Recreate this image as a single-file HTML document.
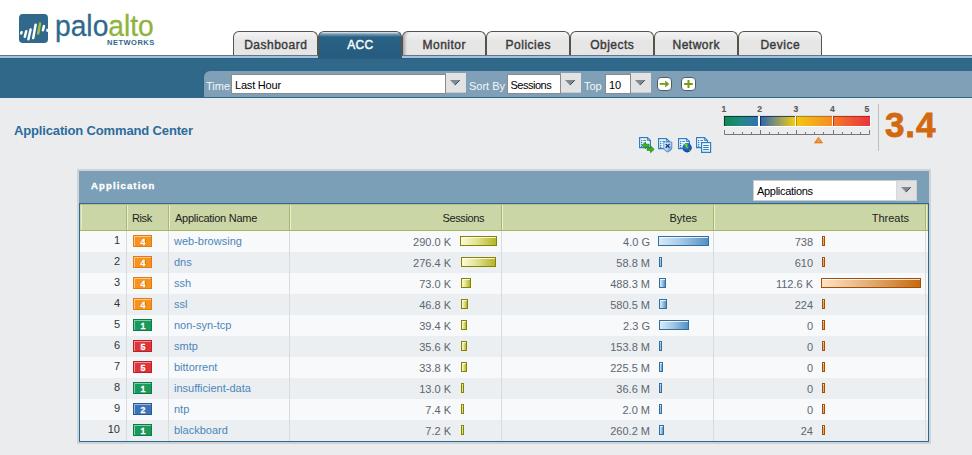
<!DOCTYPE html>
<html><head><meta charset="utf-8">
<style>
*{box-sizing:border-box;margin:0;padding:0}
html,body{width:972px;height:455px;overflow:hidden}
body{position:relative;background:#ebecee;font-family:"Liberation Sans",sans-serif;font-size:11px;color:#333}
.abs{position:absolute}
#hdr{position:absolute;left:0;top:0;width:972px;height:55px;background:#fff}
#l1{position:absolute;left:0;top:55px;width:972px;height:1px;background:#727272}
#l2{position:absolute;left:0;top:56px;width:972px;height:2px;background:#9fc3e5}
#band{position:absolute;left:0;top:58px;width:972px;height:40px;background:#30688a;border-top:1px solid #2a5f81}
#tbar{position:absolute;left:204px;top:71px;width:768px;height:26px;background:#7fa0b7;border-top-left-radius:6px;box-shadow:-1px 0 0 #2c6284}
#tbar2{position:absolute;left:0;top:97px;width:972px;height:1px;background:#2f6689}
.tab{position:absolute;top:31px;height:24px;width:84px;border:1px solid #57534b;border-bottom:none;border-radius:6px 6px 0 0;background:linear-gradient(#f4f4f4,#e6e6e6 40%,#e6e6e6);font-weight:normal;font-size:12px;color:#3a3a3a;text-align:center;line-height:26px;letter-spacing:0.5px;text-indent:0.5px;-webkit-text-stroke:0.4px #3a3a3a}
.tab.act{background:linear-gradient(#e6eef3 0,#7c9fb6 2px,#2a6286 5px,#245b7e 100%);color:#fff;height:27px;line-height:26px;letter-spacing:0.3px;-webkit-text-stroke:0.4px #fff}
.lbl{position:absolute;color:#f4f7fa;font-size:11px;top:80px}
.sel{position:absolute;top:74px;height:20px;background:#fff;border:1px solid #8c8c8c;font-size:11px;color:#000;padding-left:3px;line-height:20px;white-space:nowrap}
.btn{position:absolute;top:73px;height:20px;width:20px;background:#e2e2e2;border-bottom:1px solid #c9c9c9}
.tri{position:absolute;left:4px;top:7px;width:11px;height:6px}
.ibtn{position:absolute;top:77px;width:15px;height:14px;border:1px solid #4f5d66;border-radius:4px;background:#fff}
#title{position:absolute;left:14px;top:123px;letter-spacing:-0.15px;font-weight:bold;font-size:13px;color:#2c6b9a;white-space:nowrap}
#panel{position:absolute;left:77px;top:169px;width:854px;height:275px;background:#cfd3d7}
#phead{position:absolute;left:79px;top:171px;width:850px;height:32px;background:#7b9fb6}
#ptitle{position:absolute;left:91px;top:180px;font-weight:bold;font-size:9.5px;letter-spacing:1.15px;-webkit-text-stroke:0.35px #fff;color:#fff}
#grid{position:absolute;left:79px;top:203px;width:850px;height:239px;border:1px solid #2d6a8f;background:#f8f9fb}
#ghead{position:absolute;left:80px;top:204px;width:848px;height:27px;background:#cad6a6;border-top:1px solid #b6c08e;border-bottom:1px solid #a7b55c}
.hsep{position:absolute;top:205px;height:25px;width:2px;border-left:1px solid #a9b766;border-right:1px solid #e8eedb}
.htxt{position:absolute;top:212px;font-size:11px;color:#222;white-space:nowrap}
.row{position:absolute;left:80px;width:848px;height:21px}
.odd{background:#f8f9fb}
.even{background:#eceff1}
.bsep{position:absolute;top:231px;height:210px;width:1px;background:#d9dcdf}
.num{position:absolute;right:808px;top:3px;color:#333;font-size:11px}
.badge{position:absolute;left:53px;top:4px;width:19px;height:12px;font-size:9px;font-weight:bold;color:#fff;text-align:center;line-height:12px;padding-left:1px;-webkit-text-stroke:0.3px #fff;text-shadow:1px 0 0 rgba(70,20,0,.45)}
.r4{background:#f7931d;border:1px solid #e07c12;box-shadow:inset 1px 1px 0 #fbc78a}
.r1{background:#169b5c;border:1px solid #0f7a46;box-shadow:inset 1px 1px 0 #7fcca6}
.r5{background:#e0343a;border:1px solid #b92228;box-shadow:inset 1px 1px 0 #f08f92}
.r2{background:#3a73b8;border:1px solid #2a5a96;box-shadow:inset 1px 1px 0 #95b7e0}
.app{position:absolute;left:94px;top:4px;color:#4a86bb;white-space:nowrap}
.val{position:absolute;top:5px;color:#5d6670;white-space:nowrap}
.v1{right:477px}
.v2{right:278px}
.v3{right:115px}
.bar{position:absolute;top:5px;height:10px}
.b1{background:linear-gradient(90deg,#fbfbd6,#e2e292 45%,#b5b428);border:1px solid #858400;box-shadow:inset 0 1px 0 rgba(255,255,255,.8)}
.b2{background:linear-gradient(90deg,#d6eafa,#a6c8e6 45%,#5590c2);border:1px solid #306fa0;box-shadow:inset 0 1px 0 rgba(255,255,255,.8)}
.b3{background:linear-gradient(90deg,#fde3c4,#e6b07c 45%,#c66a12);border:1px solid #a45000;box-shadow:inset 0 1px 0 rgba(255,255,255,.8)}
</style></head><body>
<div id="hdr"></div>
<div id="l1"></div><div id="l2"></div>
<div id="band"></div>
<div id="tbar"></div>
<div id="tbar2"></div>

<!-- logo -->
<svg class="abs" style="left:19px;top:14px" width="30" height="30" viewBox="0 0 30 30">
<rect x="0" y="0" width="29" height="29" rx="3.8" fill="#31698d"/>
<g stroke="#fff" stroke-linecap="round" stroke-width="2.5" fill="none">
<line x1="2.6" y1="18.2" x2="2.2" y2="19.4"/>
<line x1="7.2" y1="17.2" x2="5.8" y2="22.7"/>
<line x1="11.6" y1="15.4" x2="9.4" y2="25.2"/>
<line x1="16.6" y1="10.7" x2="14.2" y2="24.1"/>
<line x1="25" y1="12.1" x2="23.9" y2="16.2"/>
</g>
<line x1="21" y1="9.6" x2="19.2" y2="19.5" stroke="#9ac23a" stroke-width="2.5" stroke-linecap="round"/>
<rect x="27.3" y="14.8" width="2" height="3" fill="#fff"/>
</svg>
<div class="abs" style="left:55px;top:9px;font-size:30px;line-height:34px;color:#2f6a8e;white-space:nowrap;transform:scaleX(0.94);transform-origin:0 0;-webkit-text-stroke:0.3px #2f6a8e">palo<span style="color:#8fb43b;-webkit-text-stroke:0.3px #8fb43b">alto</span></div>
<div class="abs" style="left:107px;top:39px;font-size:7.5px;font-weight:bold;line-height:8px;color:#2f6a8e;letter-spacing:0.5px">NETWORKS</div>

<!-- tabs -->
<div class="tab" style="left:233px;width:85px">Dashboard</div>
<div class="tab act" style="left:318px">ACC</div>
<div class="tab" style="left:402px;box-shadow:inset 4px 0 3px -2px rgba(0,0,0,.28)">Monitor</div>
<div class="tab" style="left:486px">Policies</div>
<div class="tab" style="left:570px">Objects</div>
<div class="tab" style="left:654px">Network</div>
<div class="tab" style="left:738px">Device</div>

<!-- toolbar -->
<div class="lbl" style="left:206px">Time</div>
<div class="sel" style="left:231px;width:215px;letter-spacing:-0.2px">Last Hour</div>
<div class="btn" style="left:446px"><svg class="tri" width="11" height="6" viewBox="0 0 11 6"><path d="M0 0H10L5 5.2Z" fill="#7b8a94"/><path d="M9.8 0.2L5 5.1" stroke="#3a4850" stroke-width="1"/></svg></div>
<div class="lbl" style="left:469px">Sort By</div>
<div class="sel" style="left:507px;width:54px;letter-spacing:-0.5px;padding-left:2.5px">Sessions</div>
<div class="btn" style="left:561px"><svg class="tri" width="11" height="6" viewBox="0 0 11 6"><path d="M0 0H10L5 5.2Z" fill="#7b8a94"/><path d="M9.8 0.2L5 5.1" stroke="#3a4850" stroke-width="1"/></svg></div>
<div class="lbl" style="left:584px">Top</div>
<div class="sel" style="left:605px;width:26px">10</div>
<div class="btn" style="left:631px"><svg class="tri" width="11" height="6" viewBox="0 0 11 6"><path d="M0 0H10L5 5.2Z" fill="#7b8a94"/><path d="M9.8 0.2L5 5.1" stroke="#3a4850" stroke-width="1"/></svg></div>
<div class="ibtn" style="left:657px"><svg width="13" height="12" viewBox="0 0 13 12" style="position:absolute;left:0;top:0"><path d="M1.7 5H7.6V6.8H1.7Z" fill="#789a12"/><path d="M7.2 2.4L11.3 5.9L7.2 9.6Z" fill="#789a12"/></svg></div>
<div class="ibtn" style="left:681px"><svg width="13" height="12" viewBox="0 0 13 12" style="position:absolute;left:0;top:0"><path d="M6.5 2V10M2.2 6H10.8" stroke="#789a12" stroke-width="2" fill="none"/></svg></div>

<div id="title">Application Command Center</div>

<!-- icons -->
<svg class="abs" style="left:636px;top:134px" width="80" height="22" viewBox="636 134 80 22">
<defs>
<linearGradient id="dg" x1="0" y1="0" x2="0" y2="1"><stop offset="0" stop-color="#ffffff"/><stop offset="0.6" stop-color="#f4f9fd"/><stop offset="1" stop-color="#d2e5f4"/></linearGradient>
<linearGradient id="sg" x1="0" y1="0" x2="1" y2="1"><stop offset="0" stop-color="#ffffff"/><stop offset="0.5" stop-color="#bcd6f0"/><stop offset="1" stop-color="#4d86cc"/></linearGradient>
<radialGradient id="gg" cx="0.4" cy="0.35" r="0.7"><stop offset="0" stop-color="#3b7ee0"/><stop offset="1" stop-color="#0d3a9a"/></radialGradient>

</defs>
<g transform="translate(639 137)">
<path d="M0.6 0.6H8.4L11.4 3.6V10.6H0.6Z" fill="url(#dg)" stroke="#2f80c2" stroke-width="1.2"/>
<path d="M8.4 0.6V3.6H11.4" fill="none" stroke="#2f80c2" stroke-width="0.9"/>
<circle cx="2.7" cy="3.4" r="0.75" fill="#2f80c2"/><rect x="4.3" y="2.9" width="2.8" height="1" fill="#2f80c2"/>
<circle cx="2.7" cy="5.5" r="0.75" fill="#2f80c2"/><circle cx="4.8" cy="5.5" r="0.6" fill="#8fbde0"/>
<circle cx="2.7" cy="7.5" r="0.75" fill="#2f80c2"/>
<circle cx="2.7" cy="9.4" r="0.75" fill="#2f80c2"/>
</g>
<path d="M642 145.3L645.6 142V144.2H649V146.6H645.6V148.6Z" fill="#3cb81e" stroke="#1a7a0e" stroke-width="0.7" stroke-linejoin="round"/>
<path d="M654.1 149.3L650.6 146V148.2H647.2V150.4H650.6V152.7Z" fill="#3cb81e" stroke="#1a7a0e" stroke-width="0.7" stroke-linejoin="round"/>
<g transform="translate(658 138)">
<path d="M0.6 0.6H8.4L11.4 3.6V10.6H0.6Z" fill="url(#dg)" stroke="#2f80c2" stroke-width="1.2"/>
<path d="M8.4 0.6V3.6H11.4" fill="none" stroke="#2f80c2" stroke-width="0.9"/>
<circle cx="2.7" cy="3.4" r="0.75" fill="#2f80c2"/><rect x="4.3" y="2.9" width="2.8" height="1" fill="#2f80c2"/>
<circle cx="2.7" cy="5.5" r="0.75" fill="#2f80c2"/><circle cx="4.8" cy="5.5" r="0.6" fill="#8fbde0"/>
<circle cx="2.7" cy="7.5" r="0.75" fill="#2f80c2"/>
<circle cx="2.7" cy="9.4" r="0.75" fill="#2f80c2"/>
</g>
<path d="M663.8 142H671.8V148.2Q671.6 150.4 667.6 152.1Q664 150.4 663.8 148.2Z" fill="url(#sg)" stroke="#4a7fc8" stroke-width="0.8"/>
<path d="M665.6 143.9L669.6 147.8M669.6 143.9L665.6 147.8" stroke="#15357a" stroke-width="1.3"/>
<g transform="translate(678 138)">
<path d="M0.6 0.6H8.4L11.4 3.6V10.6H0.6Z" fill="url(#dg)" stroke="#2f80c2" stroke-width="1.2"/>
<path d="M8.4 0.6V3.6H11.4" fill="none" stroke="#2f80c2" stroke-width="0.9"/>
<circle cx="2.7" cy="3.4" r="0.75" fill="#2f80c2"/><rect x="4.3" y="2.9" width="2.8" height="1" fill="#2f80c2"/>
<circle cx="2.7" cy="5.5" r="0.75" fill="#2f80c2"/><circle cx="4.8" cy="5.5" r="0.6" fill="#8fbde0"/>
<circle cx="2.7" cy="7.5" r="0.75" fill="#2f80c2"/>
<circle cx="2.7" cy="9.4" r="0.75" fill="#2f80c2"/>
</g>
<circle cx="687.1" cy="147.7" r="4.7" fill="url(#gg)"/>
<path d="M684.3 144.4Q686 143.2 688 143.8L687.2 146.2L688.6 147.8L687 148.4L685.6 146.6Z" fill="#5ad41e"/>
<path d="M688.8 149.3L690.9 150.2L689.6 151.5Z" fill="#5ad41e"/>
<g transform="translate(696 137)">
<path d="M0.6 0.6H8.4L11.4 3.6V10.6H0.6Z" fill="url(#dg)" stroke="#2f80c2" stroke-width="1.2"/>
<path d="M8.4 0.6V3.6H11.4" fill="none" stroke="#2f80c2" stroke-width="0.9"/>
<circle cx="2.7" cy="3.4" r="0.75" fill="#2f80c2"/><rect x="4.3" y="2.9" width="2.8" height="1" fill="#2f80c2"/>
<circle cx="2.7" cy="5.5" r="0.75" fill="#2f80c2"/><circle cx="4.8" cy="5.5" r="0.6" fill="#8fbde0"/>
<circle cx="2.7" cy="7.5" r="0.75" fill="#2f80c2"/>
<circle cx="2.7" cy="9.4" r="0.75" fill="#2f80c2"/>
</g>
<rect x="701.6" y="142.6" width="9" height="9.8" fill="url(#dg)" stroke="#2f80c2" stroke-width="1.2"/>
<path d="M703.2 145.5H708.8M703.2 147.5H708.8M703.2 149.5H708.8" stroke="#2f80c2" stroke-width="1"/>
</svg>

<!-- risk meter -->
<svg class="abs" style="left:715px;top:100px" width="165" height="50" viewBox="715 100 165 50">
<defs>
<linearGradient id="g1" x1="0" x2="1"><stop offset="0" stop-color="#0d8a4e"/><stop offset="0.5" stop-color="#1f8a86"/><stop offset="1" stop-color="#3272b4"/></linearGradient>
<linearGradient id="g2" x1="0" x2="1"><stop offset="0" stop-color="#2d62ad"/><stop offset="0.5" stop-color="#8f9a6a"/><stop offset="1" stop-color="#f3cb10"/></linearGradient>
<linearGradient id="g3" x1="0" x2="1"><stop offset="0" stop-color="#f2c712"/><stop offset="1" stop-color="#f68d25"/></linearGradient>
<linearGradient id="g4" x1="0" x2="1"><stop offset="0" stop-color="#f47a2a"/><stop offset="1" stop-color="#e8343c"/></linearGradient>
</defs>
<g font-family="Liberation Sans" font-weight="bold" font-size="8.6" fill="#5a5a5a" stroke="#5a5a5a" stroke-width="0.15" text-anchor="middle">
<text x="723.8" y="112">1</text><text x="759.6" y="112">2</text><text x="796" y="112">3</text><text x="832.4" y="112">4</text><text x="866.8" y="112">5</text>
</g>
<rect x="724" y="116" width="147" height="11" fill="#fff"/>
<rect x="723" y="115" width="147" height="1" fill="#dadcdf"/><rect x="723" y="115" width="1" height="11" fill="#dadcdf"/>
<rect x="724" y="116" width="34" height="10" fill="url(#g1)"/>
<rect x="760" y="116" width="35" height="10" fill="url(#g2)"/>
<rect x="796" y="116" width="36" height="10" fill="url(#g3)"/>
<rect x="833" y="116" width="37" height="10" fill="url(#g4)"/>
<rect x="724" y="116" width="34" height="1" fill="#0a2a20" opacity="0.8"/>
<rect x="724" y="116" width="1" height="10" fill="#0a2a20" opacity="0.8"/>
<rect x="760" y="116" width="35" height="1" fill="#0a1a60" opacity="0.7"/>
<rect x="760" y="116" width="1" height="10" fill="#0a1a60" opacity="0.7"/>
<rect x="796" y="116" width="36" height="1" fill="#8a6a00" opacity="0.6"/>
<rect x="796" y="116" width="1" height="10" fill="#8a6a00" opacity="0.6"/>
<rect x="833" y="116" width="37" height="1" fill="#a01000" opacity="0.6"/>
<rect x="833" y="116" width="1" height="10" fill="#a01000" opacity="0.6"/>
<path d="M724.5 130V134.5H869.5V130M760.5 130V134M796.5 130V134M833.5 130V134M733.5 132V134M742.5 132V134M751.5 132V134M769.5 132V134M778.5 132V134M787.5 132V134M805.5 132V134M814.5 132V134M823.5 132V134M842.5 132V134M851.5 132V134M860.5 132V134" stroke="#777" stroke-width="1" fill="none"/>
<defs><linearGradient id="mk" x1="0" y1="0" x2="0" y2="1"><stop offset="0" stop-color="#f8a94c"/><stop offset="1" stop-color="#e47a1c"/></linearGradient></defs><polygon points="818.5,137 822.6,143 814.4,143" fill="url(#mk)" stroke="#d87a20" stroke-width="0.6" stroke-linejoin="round"/><polygon points="818.4,140.2 819.3,141.9 817.5,141.9" fill="#fdd9a4" opacity="0.7"/>
</svg>
<div class="abs" style="left:878px;top:104px;width:1px;height:47px;background:#b9bec3"></div>
<div class="abs" style="left:885px;top:105px;font-size:35px;font-weight:bold;color:#d2690f;line-height:40px;letter-spacing:0.9px;-webkit-text-stroke:0.8px #d2690f">3.4</div>

<!-- panel -->
<div id="panel"></div>
<div id="phead"></div>
<div id="ptitle">Application</div>
<div class="abs" style="left:753px;top:180px;width:143px;height:21px;background:#fff;border:1px solid #c9cbcd;border-right:none;color:#000;font-size:11px;padding-left:3px;line-height:21px;letter-spacing:-0.3px">Applications</div>
<div class="abs" style="left:896px;top:180px;width:21px;height:21px;background:#e1e1e1;border:1px solid #cfcfcf;border-left:1px solid #d9d9d9"><svg class="tri" style="left:4px;top:6px" width="11" height="6" viewBox="0 0 11 6"><path d="M0 0H10L5 5.2Z" fill="#7b8a94"/><path d="M9.8 0.2L5 5.1" stroke="#3a4850" stroke-width="1"/></svg></div>

<div id="grid"></div>
<div id="rows">
<div class="row odd" style="top:231px"><span class="num">1</span><span class="badge r4">4</span><span class="app">web-browsing</span><span class="val v1">290.0 K</span><span class="bar b1" style="width:37px;left:380px"></span><span class="val v2">4.0 G</span><span class="bar b2" style="width:51px;left:578px"></span><span class="val v3">738</span><span class="bar b3" style="width:3px;left:742px"></span></div>
<div class="row even" style="top:252px"><span class="num">2</span><span class="badge r4">4</span><span class="app">dns</span><span class="val v1">276.4 K</span><span class="bar b1" style="width:35px;left:381px"></span><span class="val v2">58.8 M</span><span class="bar b2" style="width:3px;left:579px"></span><span class="val v3">610</span><span class="bar b3" style="width:3px;left:742px"></span></div>
<div class="row odd" style="top:273px"><span class="num">3</span><span class="badge r4">4</span><span class="app">ssh</span><span class="val v1">73.0 K</span><span class="bar b1" style="width:10px;left:381px"></span><span class="val v2">488.3 M</span><span class="bar b2" style="width:7px;left:579px"></span><span class="val v3">112.6 K</span><span class="bar b3" style="width:100px;left:741px"></span></div>
<div class="row even" style="top:294px"><span class="num">4</span><span class="badge r4">4</span><span class="app">ssl</span><span class="val v1">46.8 K</span><span class="bar b1" style="width:7px;left:381px"></span><span class="val v2">580.5 M</span><span class="bar b2" style="width:8px;left:579px"></span><span class="val v3">224</span><span class="bar b3" style="width:3px;left:742px"></span></div>
<div class="row odd" style="top:315px"><span class="num">5</span><span class="badge r1">1</span><span class="app">non-syn-tcp</span><span class="val v1">39.4 K</span><span class="bar b1" style="width:6px;left:381px"></span><span class="val v2">2.3 G</span><span class="bar b2" style="width:30px;left:579px"></span><span class="val v3">0</span><span class="bar b3" style="width:3px;left:742px"></span></div>
<div class="row even" style="top:336px"><span class="num">6</span><span class="badge r5">5</span><span class="app">smtp</span><span class="val v1">35.6 K</span><span class="bar b1" style="width:6px;left:381px"></span><span class="val v2">153.8 M</span><span class="bar b2" style="width:3px;left:579px"></span><span class="val v3">0</span><span class="bar b3" style="width:3px;left:742px"></span></div>
<div class="row odd" style="top:357px"><span class="num">7</span><span class="badge r5">5</span><span class="app">bittorrent</span><span class="val v1">33.8 K</span><span class="bar b1" style="width:6px;left:381px"></span><span class="val v2">225.5 M</span><span class="bar b2" style="width:4px;left:579px"></span><span class="val v3">0</span><span class="bar b3" style="width:3px;left:742px"></span></div>
<div class="row even" style="top:378px"><span class="num">8</span><span class="badge r1">1</span><span class="app">insufficient-data</span><span class="val v1">13.0 K</span><span class="bar b1" style="width:3px;left:381px"></span><span class="val v2">36.6 M</span><span class="bar b2" style="width:3px;left:579px"></span><span class="val v3">0</span><span class="bar b3" style="width:3px;left:742px"></span></div>
<div class="row odd" style="top:399px"><span class="num">9</span><span class="badge r2">2</span><span class="app">ntp</span><span class="val v1">7.4 K</span><span class="bar b1" style="width:3px;left:381px"></span><span class="val v2">2.0 M</span><span class="bar b2" style="width:3px;left:579px"></span><span class="val v3">0</span><span class="bar b3" style="width:3px;left:742px"></span></div>
<div class="row even" style="top:420px"><span class="num">10</span><span class="badge r1">1</span><span class="app">blackboard</span><span class="val v1">7.2 K</span><span class="bar b1" style="width:3px;left:381px"></span><span class="val v2">260.2 M</span><span class="bar b2" style="width:5px;left:579px"></span><span class="val v3">24</span><span class="bar b3" style="width:3px;left:742px"></span></div>
</div>
<div id="ghead"></div>
<div class="abs" style="left:81px;top:205px;width:1px;height:25px;background:#e2e9cf"></div>
<div class="hsep" style="left:126px"></div>
<div class="hsep" style="left:168px"></div>
<div class="hsep" style="left:289px"></div>
<div class="hsep" style="left:501px"></div>
<div class="hsep" style="left:713px"></div>
<div class="hsep" style="left:925px"></div>
<div class="bsep" style="left:126px"></div>
<div class="bsep" style="left:168px"></div>
<div class="bsep" style="left:289px"></div>
<div class="bsep" style="left:501px"></div>
<div class="bsep" style="left:713px"></div>
<div class="bsep" style="left:925px"></div>
<div class="htxt" style="left:132px;letter-spacing:-0.4px">Risk</div>
<div class="htxt" style="left:175px;letter-spacing:-0.26px">Application Name</div>
<div class="htxt" style="right:488px;letter-spacing:-0.4px">Sessions</div>
<div class="htxt" style="right:275px">Bytes</div>
<div class="htxt" style="right:63px">Threats</div>
</body></html>
